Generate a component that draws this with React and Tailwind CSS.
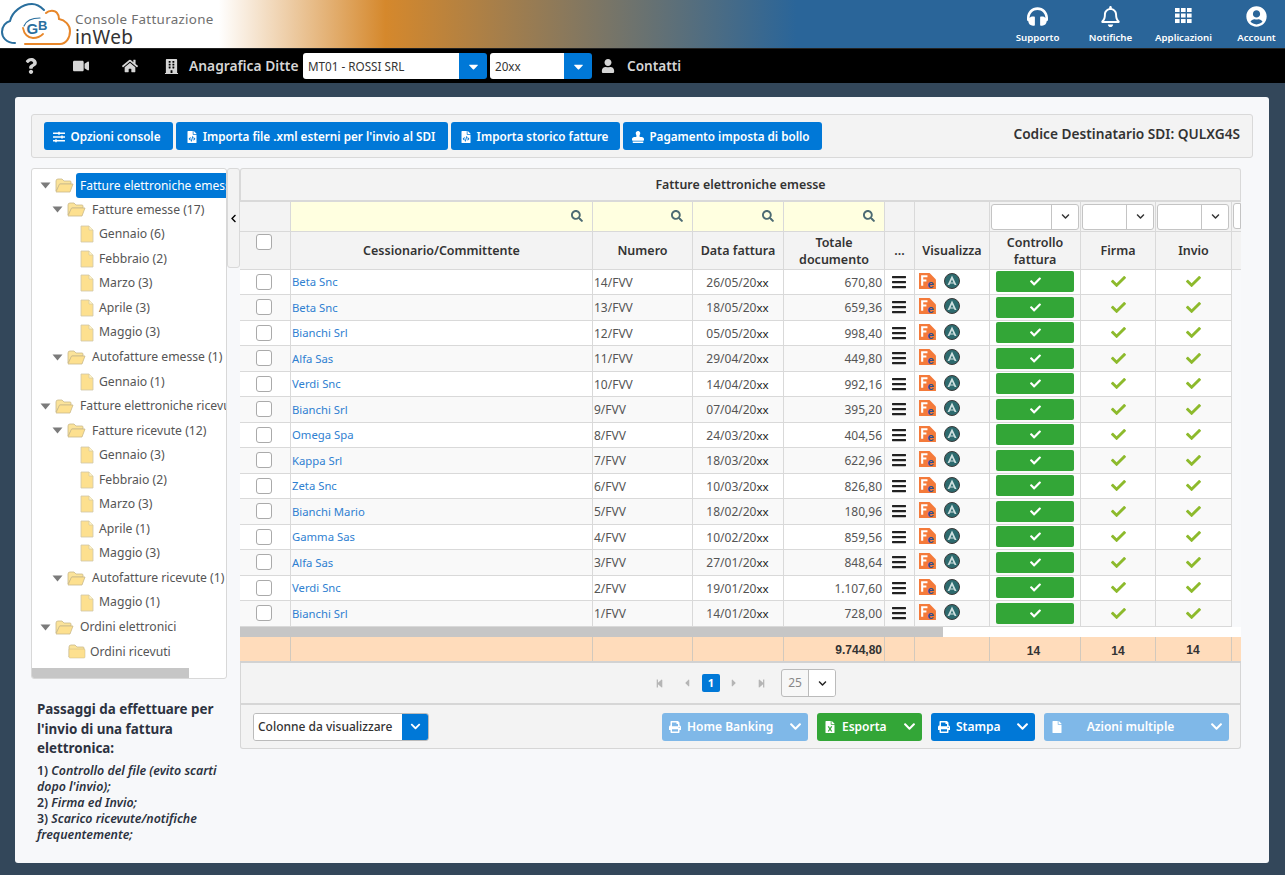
import React from "react";
import {
  FaQuestion, FaVideo, FaHome, FaBuilding, FaUser, FaSlidersH, FaFileCode, FaStamp, FaPrint, FaFileExcel, FaFile,
  FaSearch, FaBars, FaCheck, FaChevronDown, FaChevronLeft, FaStepBackward, FaStepForward, FaCaretLeft, FaCaretRight,
  FaCaretDown, FaHeadphones, FaRegBell, FaUserCircle,
} from "react-icons/fa";

const FONT = "font-['Noto_Sans','Open_Sans',sans-serif]";
const GRID = "grid grid-cols-[51px_302px_100px_91px_101px_30px_75px_91px_75px_76px_9px]";

const rows = [
  ["Beta Snc", "14/FVV", "26/05/20", "670,80"],
  ["Beta Snc", "13/FVV", "18/05/20", "659,36"],
  ["Bianchi Srl", "12/FVV", "05/05/20", "998,40"],
  ["Alfa Sas", "11/FVV", "29/04/20", "449,80"],
  ["Verdi Snc", "10/FVV", "14/04/20", "992,16"],
  ["Bianchi Srl", "9/FVV", "07/04/20", "395,20"],
  ["Omega Spa", "8/FVV", "24/03/20", "404,56"],
  ["Kappa Srl", "7/FVV", "18/03/20", "622,96"],
  ["Zeta Snc", "6/FVV", "10/03/20", "826,80"],
  ["Bianchi Mario", "5/FVV", "18/02/20", "180,96"],
  ["Gamma Sas", "4/FVV", "10/02/20", "859,56"],
  ["Alfa Sas", "3/FVV", "27/01/20", "848,64"],
  ["Verdi Snc", "2/FVV", "19/01/20", "1.107,60"],
  ["Bianchi Srl", "1/FVV", "14/01/20", "728,00"],
];

const tree = [
  [0, "open", "Fatture elettroniche emesse", true],
  [1, "open", "Fatture emesse (17)"],
  [2, "file", "Gennaio (6)"],
  [2, "file", "Febbraio (2)"],
  [2, "file", "Marzo (3)"],
  [2, "file", "Aprile (3)"],
  [2, "file", "Maggio (3)"],
  [1, "open", "Autofatture emesse (1)"],
  [2, "file", "Gennaio (1)"],
  [0, "open", "Fatture elettroniche ricevute"],
  [1, "open", "Fatture ricevute (12)"],
  [2, "file", "Gennaio (3)"],
  [2, "file", "Febbraio (2)"],
  [2, "file", "Marzo (3)"],
  [2, "file", "Aprile (1)"],
  [2, "file", "Maggio (3)"],
  [1, "open", "Autofatture ricevute (1)"],
  [2, "file", "Maggio (1)"],
  [0, "open", "Ordini elettronici"],
  [1, "closed", "Ordini ricevuti"],
];

function Logo() {
  return (
    <div className="flex items-start h-[48px]">
      <svg width="74" height="48" viewBox="0 0 74 48" className="shrink-0">
        <path d="M15 43 C6 43 2 37 2 32 C2 26 6 22 10 21 C12 12 22 4 32 4 C37 4 41 7 44 10" fill="none" stroke="#2a6f9e" strokeWidth="2" strokeLinecap="round" />
        <path d="M46 13 C49 10 55 10 57 13 C59 15 59 18 59 19 C65 20 70 25 70 31 C70 38 66 44 60 44 L25 44" fill="none" stroke="#e8872a" strokeWidth="2" strokeLinecap="round" />
        <path d="M23 28 C24 34 28 38 33 38 C37 38 40 37 43 34" fill="none" stroke="#e8872a" strokeWidth="1.8" strokeLinecap="round" />
        <path d="M24 26 C26 21 32 18 40 18" fill="none" stroke="#2a6f9e" strokeWidth="1.2" strokeLinecap="round" />
        <text x="26.5" y="34" fontSize="15" fontWeight="700" fontFamily="Liberation Sans" fill="#2a6f9e">G</text>
        <text x="38" y="29.5" fontSize="13" fontWeight="700" fontFamily="Liberation Sans" fill="#2a6f9e">B</text>
      </svg>
      <div className={`ml-[1px] mt-[11px] flex flex-col ${FONT}`}>
        <span className="text-[13.4px] leading-[16px] tracking-[0.3px] text-[#6f6f6f] whitespace-nowrap">Console Fatturazione</span>
        <span className="text-[19px] leading-[20px] text-[#333] tracking-[0.4px]">inWeb</span>
      </div>
    </div>
  );
}

function AppsIcon() {
  const cells = [0, 6, 12];
  return (
    <svg width="17" height="16" viewBox="0 0 17 16" fill="#fff">
      {cells.map((y) => cells.map((x) => <rect key={`${x}-${y}`} x={x} y={y * 0.92} width="4.6" height="4" />))}
    </svg>
  );
}

function TopItem({ icon, label }) {
  return (
    <div className="w-[73px] flex flex-col items-center">
      <div className="h-[22px] flex items-center justify-center text-white text-[21px]">{icon}</div>
      <span className="mt-[4px] text-[9.7px] leading-[14px] font-semibold text-white">{label}</span>
    </div>
  );
}

function Dropdown({ value, w }) {
  return (
    <div className={`flex h-[26px] rounded-[3px] overflow-hidden ${w}`}>
      <div className="flex-1 bg-white text-[11.7px] leading-[26px] pl-[5px] text-[#333]">{value}</div>
      <div className="w-[28px] bg-[#0078d7] flex items-center justify-center">
        <FaCaretDown className="text-white text-[15px]" />
      </div>
    </div>
  );
}

function NavBar() {
  return (
    <div className="h-[35px] bg-black flex items-center border-t border-[#222] text-[#d5d5d5]">
      <div className="w-[62px] pl-[23px] text-[16px]"><FaQuestion /></div>
      <div className="w-[51px] pl-[11px] text-[16px]"><FaVideo /></div>
      <div className="w-[50px] pl-[9px] text-[16px]"><FaHome /></div>
      <div className="w-[26px] pl-[1px] text-[15px]"><FaBuilding /></div>
      <span className="w-[114px] text-[13.8px] font-semibold whitespace-nowrap">Anagrafica Ditte</span>
      <Dropdown value="MT01 - ROSSI SRL" w="w-[184px]" />
      <div className="w-[3px]" />
      <Dropdown value="20xx" w="w-[102px]" />
      <div className="ml-[9px] w-[26px] text-[14px]"><FaUser /></div>
      <span className="text-[13.6px] font-semibold">Contatti</span>
    </div>
  );
}

function ToolButton({ icon, label, w }) {
  return (
    <button className={`h-[28px] ${w} rounded-[3px] bg-[#0078d7] text-white flex items-center justify-center gap-[5px] text-[11.7px] font-semibold whitespace-nowrap pt-[1px] pr-[3px]`}>
      <span className="text-[12px]">{icon}</span>
      {label}
    </button>
  );
}

function Folder({ open }) {
  return (
    <svg width="19" height="15" viewBox="0 0 19 15" className="shrink-0">
      <path d="M1 3 Q1 1 3 1 H7 L9 3 H15 Q16 3 16 4 V6 H5 L1 13Z" fill="#fbe39a" stroke="#c9b98a" strokeWidth="0.8" />
      {open ? (
        <path d="M4.5 6 H18 L15 14 H1 Z" fill="#fde08f" stroke="#c9b98a" strokeWidth="0.8" />
      ) : (
        <path d="M1 5 H16 Q17 5 17 6 V13 Q17 14 16 14 H2 Q1 14 1 13Z" fill="#fde08f" stroke="#c9b98a" strokeWidth="0.5" />
      )}
    </svg>
  );
}

function FileIcon() {
  return (
    <svg width="14" height="18" viewBox="0 0 14 18" className="shrink-0">
      <path d="M1 1 H9 L13 5 V17 H1 Z" fill="#fde08f" stroke="#cfc6a8" strokeWidth="0.8" />
      <path d="M9 1 V5 H13" fill="#fff3c8" stroke="#cfc6a8" strokeWidth="0.6" />
    </svg>
  );
}

function TreeRow({ level, kind, label, selected }) {
  const pad = level === 0 ? "pl-[8px]" : level === 1 ? "pl-[20px]" : "pl-[48px]";
  return (
    <div className={`h-[24.55px] flex items-center whitespace-nowrap ${pad}`}>
      {kind === "open" && (
        <svg width="11" height="7" viewBox="0 0 11 7" className="shrink-0 mr-[1px]">
          <path d="M0.5 0.5 H10.5 L5.5 6.5Z" fill="#7b7b7b" />
        </svg>
      )}
      {kind === "closed" && <span className="w-[16px] shrink-0" />}
      {kind === "file" ? <FileIcon /> : <span className={kind === "closed" ? "" : "ml-[3px]"}><Folder open={kind === "open"} /></span>}
      <span
        className={
          selected
            ? "ml-[2px] pl-[4px] pr-[20px] h-[25px] leading-[25px] bg-[#0078d7] text-white rounded-l-[3px] text-[12px]"
            : `${kind === "file" ? "ml-[5px]" : kind === "closed" ? "ml-[3px]" : "ml-[6px]"} text-[12.2px] text-[#555]`
        }
      >
        {label}
      </span>
    </div>
  );
}

function Tree() {
  return (
    <div className="h-[511px] w-full bg-white border border-[#d8d8d8] rounded-[3px] overflow-hidden flex flex-col">
      <div className="flex-1 overflow-hidden pt-[4px]">
        {tree.map(([l, k, t, s], i) => (
          <TreeRow key={i} level={l} kind={k} label={t} selected={s} />
        ))}
      </div>
      <div className="h-[10px] shrink-0"><div className="h-full w-[157px] bg-[#c6c6c6]" /></div>
    </div>
  );
}

function Box() {
  return <span className="block w-[16px] h-[16px] bg-white border border-[#aaa] rounded-[3px]" />;
}

function FeIcon() {
  return (
    <svg width="18" height="18" viewBox="0 0 17 17">
      <path d="M0 1 H10 L16 7 V16 H0Z" fill="#f47a3a" />
      <path d="M2 3 H8 V5 H4 V7 H7 V9 H4 V13 H2Z" fill="#fff" />
      <text x="8" y="15.5" fontSize="11" fontWeight="700" fontFamily="Liberation Sans" fill="#2b4c96">e</text>
    </svg>
  );
}

function SealIcon() {
  return (
    <svg width="16" height="16" viewBox="0 0 16 16">
      <circle cx="8" cy="8" r="7.5" fill="#2d6a6e" stroke="#3a3a3a" strokeWidth="1" />
      <path d="M8 2.5 L12.5 12 H10.6 L8 6.5 L5.4 12 H3.5Z" fill="#cfe0e0" />
      <path d="M6 10 H10" stroke="#cfe0e0" strokeWidth="1" />
    </svg>
  );
}

function Cell({ className = "", children }) {
  return <div className={`border-r border-b border-[#d9d9d9] flex items-center min-w-0 ${className}`}>{children}</div>;
}

function SearchCell() {
  return (
    <Cell className="bg-[#ffffe0] justify-end pr-[9px] pb-[2px]">
      <FaSearch className="text-[12px] text-[#4d6b73]" />
    </Cell>
  );
}

function FilterSelect({ w, right }) {
  return (
    <div className={`h-[26px] ${w} bg-white border border-[#c4c4c4] rounded-[3px] flex overflow-hidden`}>
      <div className="flex-1" />
      <div className={`${right} border-l border-[#c4c4c4] flex items-center justify-center`}>
        <FaChevronDown className="text-[9px] text-[#333]" />
      </div>
    </div>
  );
}

function HeadCell({ children }) {
  return (
    <Cell className="justify-center text-center px-[2px] pt-[1px] text-[12.5px] leading-[17px] font-semibold text-[#333] bg-[#f3f3f3]">
      <span>{children}</span>
    </Cell>
  );
}

function DataRow({ r, i }) {
  const bg = i % 2 === 0 ? "bg-white" : "bg-[#f9f9f9]";
  return (
    <div className={`${GRID} h-[25.5px] ${bg} text-[12px] text-[#555]`}>
      <Cell className="pl-[16px]"><Box /></Cell>
      <Cell className="pl-[1px] pt-[2px] text-[11.3px] text-[#2f7fd1]">{r[0]}</Cell>
      <Cell className="pl-[1px] pt-[2px]">{r[1]}</Cell>
      <Cell className="justify-center pt-[2px] pr-[1px]">
        <span>{r[2]}<span className="text-[#222] text-[11.5px]">xx</span></span>
      </Cell>
      <Cell className="justify-end pr-[2px] pt-[2px]">{r[3]}</Cell>
      <Cell className="justify-center pr-[1px]"><FaBars className="text-[16px] text-[#222]" /></Cell>
      <Cell className="pl-[4px] gap-[7px] pb-[2px]"><FeIcon /><SealIcon /></Cell>
      <Cell className="justify-center">
        <div className="w-[78px] h-[21px] bg-[#33a637] rounded-[2px] flex items-center justify-center">
          <FaCheck className="text-white text-[11px]" />
        </div>
      </Cell>
      <Cell className="justify-center"><FaCheck className="text-[#8dba2c] text-[15px]" /></Cell>
      <Cell className="justify-center"><FaCheck className="text-[#8dba2c] text-[15px]" /></Cell>
      <div className="bg-[#f8f9fb]" />
    </div>
  );
}

function ActionButton({ w, bg, icon, label, center }) {
  return (
    <div className={`${w} ${bg} h-[28px] rounded-[3px] flex items-center pl-[7px] pr-[6px] text-white text-[12px] font-semibold whitespace-nowrap`}>
      <span className="text-[12px] mr-[6px]">{icon}</span>
      <span className={center ? "flex-1 text-center pr-[18px]" : "flex-1"}>{label}</span>
      <FaChevronDown className="text-[13px]" />
    </div>
  );
}

function DataTable() {
  return (
    <div className="w-[1001px] overflow-hidden">
      <div className="h-[34px] bg-[#f3f3f3] border border-[#d9d9d9] border-b-2 rounded-t-[3px] flex items-center justify-center text-[12.4px] font-semibold text-[#333] pt-[2px]">
        Fatture elettroniche emesse
      </div>
      <div className={`${GRID} h-[30px] bg-[#f3f3f3]`}>
        <Cell />
        <SearchCell />
        <SearchCell />
        <SearchCell />
        <SearchCell />
        <Cell />
        <Cell />
        <Cell className="pl-[1px]"><FilterSelect w="w-[88px]" right="w-[27px]" /></Cell>
        <Cell className="pl-[1px]"><FilterSelect w="w-[72px]" right="w-[27px]" /></Cell>
        <Cell className="pl-[1px]"><FilterSelect w="w-[72px]" right="w-[27px]" /></Cell>
        <div className="border-b border-[#d9d9d9] pl-[1px] pt-[1px]"><div className="h-[26px] bg-white border border-[#c4c4c4] rounded-l-[3px]" /></div>
      </div>
      <div className={`${GRID} h-[37.5px] bg-[#f3f3f3]`}>
        <Cell className="pl-[16px] pb-[17px]"><Box /></Cell>
        <HeadCell>Cessionario/Committente</HeadCell>
        <HeadCell>Numero</HeadCell>
        <HeadCell>Data fattura</HeadCell>
        <HeadCell>Totale documento</HeadCell>
        <HeadCell>...</HeadCell>
        <HeadCell>Visualizza</HeadCell>
        <HeadCell>Controllo fattura</HeadCell>
        <HeadCell>Firma</HeadCell>
        <HeadCell>Invio</HeadCell>
        <div className="border-b border-[#d9d9d9]" />
      </div>
      {rows.map((r, i) => <DataRow key={r[1]} r={r} i={i} />)}
      <div className="h-[10.5px] flex bg-white"><div className="w-[703px] bg-[#c6c6c6]" /></div>
      <div className={`${GRID} h-[26px] bg-[#ffdcbb] border-b-2 border-[#d2d2d2] text-[12px] font-bold text-[#333] font-['Liberation_Sans',sans-serif]`}>
        <div className="border-r border-[#d2c9bd]" />
        <div className="border-r border-[#d2c9bd]" />
        <div className="border-r border-[#d2c9bd]" />
        <div className="border-r border-[#d2c9bd]" />
        <div className="border-r border-[#d2c9bd] flex items-center justify-end pr-[2px] pt-[2px]">9.744,80</div>
        <div className="border-r border-[#d2c9bd]" />
        <div className="border-r border-[#d2c9bd]" />
        <div className="border-r border-[#d2c9bd] flex items-center justify-center pr-[3px] pt-[4px]">14</div>
        <div className="border-r border-[#d2c9bd] flex items-center justify-center pt-[4px]">14</div>
        <div className="border-r border-[#d2c9bd] flex items-center justify-center pr-[1px] pt-[2px]">14</div>
        <div />
      </div>
      <div className="h-[42px] bg-[#f3f3f3] border-x border-b-2 border-[#d6d6d6] flex items-center pl-[413px] text-[#b5b5b5] text-[11px]">
        <FaStepBackward className="text-[9px] ml-[1px]" />
        <FaCaretLeft className="ml-[17px] text-[12px]" />
        <span className="ml-[9px] w-[18px] h-[18px] rounded-[2px] bg-[#0078d7] text-white font-bold text-[11px] flex items-center justify-center">1</span>
        <FaCaretRight className="ml-[8px] text-[12px]" />
        <FaStepForward className="ml-[17px] text-[9px]" />
        <div className="ml-[15px] w-[55px] h-[28px] border border-[#bbb] rounded-[3px] flex overflow-hidden bg-[#f7f7f7]">
          <span className="w-[26px] text-[12px] text-[#888] flex items-center justify-center">25</span>
          <span className="flex-1 bg-white border-l border-[#bbb] flex items-center justify-center text-[#222]">
            <FaChevronDown className="text-[9px]" />
          </span>
        </div>
      </div>
      <div className="h-[44px] bg-[#f3f3f3] border-x border-b border-[#d6d6d6] rounded-b-[3px] flex items-center pl-[12px] pr-[11px]">
        <div className="w-[176px] h-[28px] flex rounded-[3px] border border-[#bbb] overflow-hidden">
          <span className="flex-1 bg-white text-[12px] font-medium text-[#333] leading-[26px] pl-[4px]">Colonne da visualizzare</span>
          <span className="w-[26px] bg-[#0078d7] flex items-center justify-center text-white"><FaChevronDown className="text-[11px]" /></span>
        </div>
        <div className="flex-1" />
        <ActionButton w="w-[146px]" bg="bg-[#7fb8e8]" icon={<FaPrint />} label="Home Banking" />
        <ActionButton w="w-[105px] ml-[9px]" bg="bg-[#33a637]" icon={<FaFileExcel />} label="Esporta" />
        <ActionButton w="w-[104px] ml-[9px]" bg="bg-[#0078d7]" icon={<FaPrint />} label="Stampa" />
        <ActionButton w="w-[185px] ml-[9px]" bg="bg-[#7fb8e8]" icon={<FaFile />} label="Azioni multiple" center />
      </div>
    </div>
  );
}

export default function App() {
  return (
    <div className={`w-[1285px] h-[875px] bg-[#33475a] flex flex-col overflow-hidden ${FONT}`}>
      <div className="h-[48px] shrink-0 flex justify-between bg-[linear-gradient(90deg,#fff_17%,#d5882c_30%,#2a6599_62%)]">
        <Logo />
        <div className="flex pt-[5px] mr-[-8px]">
          <TopItem icon={<FaHeadphones />} label="Supporto" />
          <TopItem icon={<FaRegBell />} label="Notifiche" />
          <TopItem icon={<AppsIcon />} label="Applicazioni" />
          <TopItem icon={<FaUserCircle />} label="Account" />
        </div>
      </div>
      <NavBar />
      <div className="flex-1 pt-[14px] pl-[15px] pr-[16px] pb-[12px] min-h-0">
        <div className="h-full bg-[#f7f8fa] rounded-[3px] pt-[17px] pl-[16px] pr-[16px]">
          <div className="h-[44px] bg-[#f3f3f3] border border-[#d9d9d9] rounded-[3px] flex items-center pl-[12px] pr-[12px]">
            <div className="flex gap-[3px]">
              <ToolButton w="w-[129px]" icon={<FaSlidersH />} label="Opzioni console" />
              <ToolButton w="w-[272px]" icon={<FaFileCode />} label="Importa file .xml esterni per l'invio al SDI" />
              <ToolButton w="w-[169px]" icon={<FaFileCode />} label="Importa storico fatture" />
              <ToolButton w="w-[199px]" icon={<FaStamp />} label="Pagamento imposta di bollo" />
            </div>
            <div className="flex-1" />
            <span className="text-[13.7px] font-semibold text-[#333] pb-[4px]">Codice Destinatario SDI: QULXG4S</span>
          </div>
          <div className="flex mt-[10px]">
            <div className="w-[196px] shrink-0">
              <Tree />
              <div className="pl-[6px] pt-[21px] text-[#2c3240]">
                <div className="text-[13.4px] font-bold leading-[19.5px]">
                  Passaggi da effettuare per<br />l'invio di una fattura<br />elettronica:
                </div>
                <div className="mt-[4px] text-[12.4px] font-semibold leading-[16px]">
                  1) <i>Controllo del file (evito scarti</i><br />
                  <i>dopo l'invio);</i><br />
                  2) <i>Firma ed Invio;</i><br />
                  3) <i>Scarico ricevute/notifiche</i><br />
                  <i>frequentemente;</i>
                </div>
              </div>
            </div>
            <div className="w-[13px] shrink-0">
              <div className="h-[100px] bg-[#f3f3f3] border border-[#d9d9d9] rounded-[3px] flex items-center justify-center">
                <FaChevronLeft className="text-[9px] text-black" />
              </div>
            </div>
            <DataTable />
          </div>
        </div>
      </div>
    </div>
  );
}
